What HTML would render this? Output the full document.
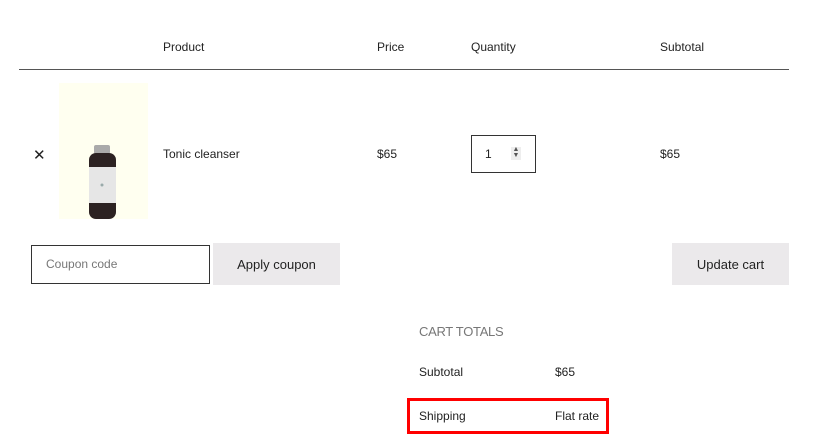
<!DOCTYPE html>
<html><head><style>
body{margin:0;width:820px;height:436px;background:#fff;font-family:"Liberation Sans",sans-serif;font-size:12px;color:#222;position:relative;overflow:hidden}
.a{position:absolute;line-height:1}
</style></head><body>
<div class="a" style="left:163px;top:41px">Product</div>
<div class="a" style="left:377px;top:41px">Price</div>
<div class="a" style="left:471px;top:41px">Quantity</div>
<div class="a" style="left:660px;top:41px">Subtotal</div>
<div class="a" style="left:19px;top:69px;width:770px;height:1px;background:#555"></div>
<div class="a" style="left:33px;top:148px;font-size:15px">✕</div>
<div class="a" style="left:59px;top:83px;width:89px;height:136px;background:#fffff0"></div>
<svg class="a" style="left:85px;top:145px" width="36" height="75">
<rect x="9" y="0" width="16" height="9" rx="2" fill="#aaa"/>
<rect x="4" y="8" width="27" height="66" rx="7" fill="#2c2222"/>
<rect x="4" y="22" width="27" height="36" fill="#e6e6e6"/>
<circle cx="17" cy="40" r="1.5" fill="#9aa"/>
</svg>
<div class="a" style="left:163px;top:148px">Tonic cleanser</div>
<div class="a" style="left:377px;top:148px">$65</div>
<div class="a" style="left:471px;top:135px;width:63px;height:36px;border:1px solid #333"></div>
<div class="a" style="left:485px;top:148px">1</div>
<div class="a" style="left:511px;top:147px;width:10px;height:13px;background:#eee;font-size:7px;text-align:center;line-height:6px;color:#555">▲<br>▼</div>
<div class="a" style="left:660px;top:148px">$65</div>
<div class="a" style="left:31px;top:245px;width:177px;height:37px;border:1px solid #333"></div>
<div class="a" style="left:46px;top:258px;color:#777">Coupon code</div>
<div class="a" style="left:213px;top:243px;width:127px;height:42px;background:#ebe9eb;text-align:center;line-height:43px;font-size:13px">Apply coupon</div>
<div class="a" style="left:672px;top:243px;width:117px;height:42px;background:#ebe9eb;text-align:center;line-height:43px;font-size:13px">Update cart</div>
<div class="a" style="left:419px;top:325px;font-size:13px;color:#777;letter-spacing:-0.3px">CART TOTALS</div>
<div class="a" style="left:419px;top:366px">Subtotal</div>
<div class="a" style="left:555px;top:366px">$65</div>
<div class="a" style="left:407px;top:398px;width:196px;height:30px;border:3px solid #f00"></div>
<div class="a" style="left:419px;top:410px">Shipping</div>
<div class="a" style="left:555px;top:410px">Flat rate</div>
</body></html>
